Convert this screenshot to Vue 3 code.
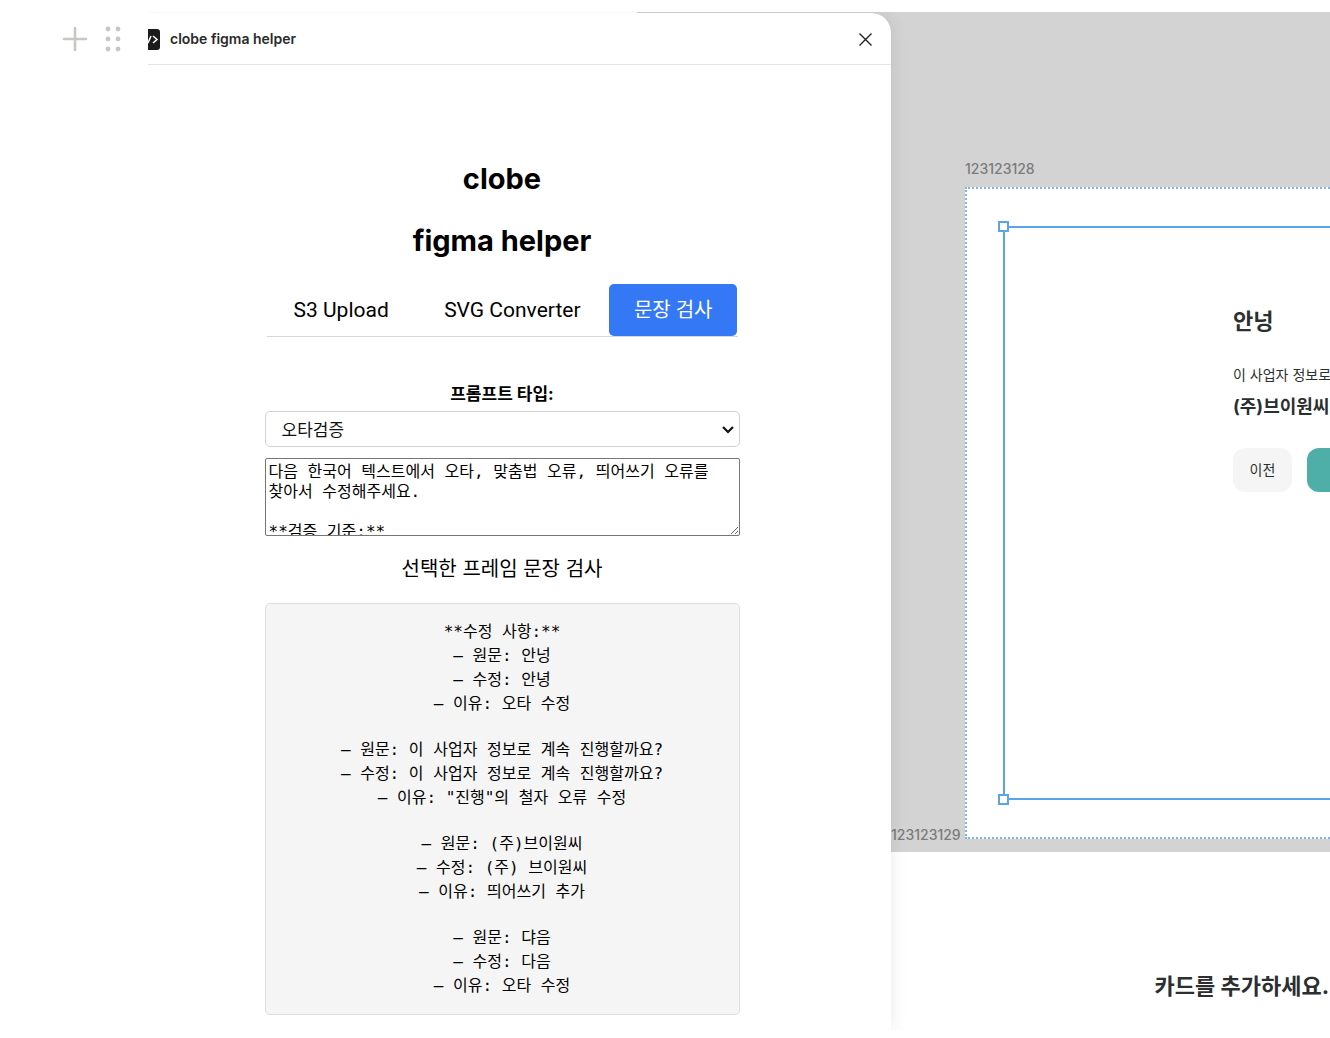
<script setup>
import { ref } from 'vue'

const tabs = [
  { id: 's3', label: 'S3 Upload' },
  { id: 'svg', label: 'SVG Converter' },
  { id: 'check', label: '문장 검사' },
]
const activeTab = ref('check')
const promptType = ref('오타검증')
const prompt = ref(
  '다음 한국어 텍스트에서 오타, 맞춤법 오류, 띄어쓰기 오류를 찾아서 수정해주세요.\n\n**검증 기준:**'
)
const results = [
  '**수정 사항:**\n– 원문: 안넝\n– 수정: 안녕\n– 이유: 오타 수정',
  '– 원문: 이 사업자 정보로 계속 진행할까요?\n– 수정: 이 사업자 정보로 계속 진행할까요?\n– 이유: "진행"의 철자 오류 수정',
  '– 원문: (주)브이원씨\n– 수정: (주) 브이원씨\n– 이유: 띄어쓰기 추가',
  '– 원문: 댜음\n– 수정: 다음\n– 이유: 오타 수정',
]
</script>

<template>
  <div class="page">
    <aside class="gutter">
      <button class="tool" type="button" aria-label="Add block">
        <svg width="26" height="26" viewBox="0 0 26 26" fill="none" stroke="#c8c7c3" stroke-width="2.6" stroke-linecap="round">
          <path d="M13 2v22M2 13h22" />
        </svg>
      </button>
      <button class="tool" type="button" aria-label="Drag block">
        <svg width="16" height="26" viewBox="0 0 16 26" fill="#c8c7c3">
          <circle cx="3" cy="3" r="2.4" /><circle cx="13" cy="3" r="2.4" />
          <circle cx="3" cy="13" r="2.4" /><circle cx="13" cy="13" r="2.4" />
          <circle cx="3" cy="23" r="2.4" /><circle cx="13" cy="23" r="2.4" />
        </svg>
      </button>
    </aside>

    <div class="shot">
      <section class="panel">
        <header class="bar">
          <svg class="logo" width="12" height="21" viewBox="0 0 12 21" aria-hidden="true">
            <path d="M0 0h9a3 3 0 0 1 3 3v15a3 3 0 0 1-3 3H0z" fill="#1b1b1b" />
            <path d="M0 14L3 7M5 7l4 3.500-4 3.500" fill="none" stroke="#fff" stroke-width="1.500" />
          </svg>
          <span class="bar-title">clobe figma helper</span>
          <button class="close" type="button" aria-label="Close">
            <svg width="13" height="13" viewBox="0 0 13 13" fill="none" stroke="#222" stroke-width="1.400">
              <path d="M.5.5l12 12M12.500.5l-12 12" />
            </svg>
          </button>
        </header>

        <main class="body">
          <h1>clobe</h1>
          <h1>figma helper</h1>
          <nav class="tabs">
            <button
              v-for="tab in tabs"
              :key="tab.id"
              type="button"
              class="tab"
              :class="{ active: activeTab === tab.id }"
              @click="activeTab = tab.id"
            >{{ tab.label }}</button>
          </nav>

          <label class="label" for="prompt-type">프롬프트 타입:</label>
          <div class="select-wrap">
            <select id="prompt-type" v-model="promptType">
              <option>오타검증</option>
            </select>
            <svg class="chevron" width="12" height="8" viewBox="0 0 12 8" fill="none" stroke="#111" stroke-width="2.200">
              <path d="M1 1l5 5 5-5" />
            </svg>
          </div>
          <textarea v-model="prompt" aria-label="프롬프트" spellcheck="false"></textarea>
          <button class="run" type="button">선택한 프레임 문장 검사</button>
          <div class="result">
            <pre v-for="(group, i) in results" :key="i">{{ group }}</pre>
          </div>
        </main>
      </section>

      <section class="canvas">
        <div class="board">
          <span class="frame-name">123123128</span>
          <div class="frame-row">
            <span class="frame-name next">123123129</span>
            <div class="frame">
              <div class="selection">
                <i class="handle top"></i>
                <i class="handle bottom"></i>
                <h2>안넝</h2>
                <p class="question">이 사업자 정보로</p>
                <p class="company">(주)브이원씨</p>
                <div class="actions">
                  <button class="prev" type="button">이전</button>
                  <button class="next-step" type="button" aria-label="다음"></button>
                </div>
              </div>
            </div>
          </div>
        </div>
        <p class="add-card">카드를 추가하세요.</p>
      </section>
    </div>
  </div>
</template>

<style>
body {
  margin: 0;
  background: #fff;
}
</style>

<style scoped>
* {
  box-sizing: border-box;
}
.page {
  display: flex;
  padding: 12px 0 9px;
  overflow: hidden;
  font-family: Inter, 'Noto Sans CJK KR', sans-serif;
  color: #000;
}
button {
  border: 0;
  padding: 0;
  background: none;
  font-family: inherit;
  color: inherit;
}
h1, h2, p, pre {
  margin: 0;
}
svg {
  display: block;
}
.gutter {
  flex: 0 0 148px;
  display: flex;
  align-items: flex-start;
  gap: 17px;
  padding: 14px 0 0 62px;
}
.shot {
  flex: 1;
  min-width: 0;
  display: flex;
  background: linear-gradient(#d3d3d3, #d3d3d3) right top / 693px 840px no-repeat;
}
.panel {
  position: relative;
  flex: 743 1 0;
  min-width: 0;
  margin-top: 1px;
  background: #fff;
  border-radius: 0 20px 0 0;
  box-shadow: 2px 0 16px rgba(0, 0, 0, 0.08);
  clip-path: inset(-1px -30px 0 0);
}
.bar {
  display: flex;
  align-items: center;
  height: 52px;
  padding: 1px 19px 0 0;
  border-bottom: 1px solid #e4e4e4;
}
.bar-title {
  flex: 1;
  margin-left: 10px;
  font-size: 14px;
  font-weight: 600;
  line-height: 20px;
  color: #2a2a2a;
}
.body {
  display: flex;
  flex-direction: column;
  width: 475px;
  max-width: 100%;
  margin-left: calc(50% - 255px);
  padding: 92px 0 15px;
}
h1 {
  font-size: 29px;
  line-height: 44px;
  margin-bottom: 18px;
  font-weight: 700;
  text-align: center;
}
.tabs {
  display: flex;
  justify-content: space-between;
  margin: 3px 2px 0;
  border-bottom: 1px solid #d6d6d6;
}
.tab {
  height: 52px;
  padding: 0 27px;
  font: 400 21px/52px Roboto, 'Noto Sans CJK KR', sans-serif;
  white-space: nowrap;
}
.tab.active {
  padding: 0 25px;
  background: #3478f6;
  color: #fff;
  font-size: 20px;
  border-radius: 5px;
}
.label {
  margin-top: 46px;
  font-size: 17px;
  line-height: 22px;
  font-weight: 700;
  text-align: center;
}
.select-wrap {
  position: relative;
  margin-top: 6px;
}
select {
  display: block;
  width: 100%;
  height: 36px;
  padding: 0 16px;
  border: 1px solid #d2d2d2;
  border-radius: 5px;
  background: #fff;
  appearance: none;
  font: 400 17px/24px 'Noto Sans CJK KR', sans-serif;
  color: #111;
}
.chevron {
  position: absolute;
  right: 6px;
  top: 15px;
  pointer-events: none;
}
textarea {
  display: block;
  height: 78px;
  margin-top: 11px;
  padding: 3px;
  border: 1px solid #767676;
  border-radius: 2px;
  overflow: hidden;
  resize: vertical;
  word-break: keep-all;
  font: 400 16px/20px 'DejaVu Sans Mono', 'Noto Sans CJK KR', monospace;
  color: #000;
}
.run {
  margin: 19px 0 20px;
  font-size: 20px;
  line-height: 28px;
}
.result {
  display: flex;
  flex-direction: column;
  gap: 22px;
  padding: 16px;
  border: 1px solid #dedede;
  border-radius: 5px;
  background: #f5f5f5;
  text-align: center;
}
pre {
  font: 400 16px/24px 'DejaVu Sans Mono', 'Noto Sans CJK KR', monospace;
}
.canvas {
  flex: 439 1 0;
  min-width: 0;
}
.board {
  height: 840px;
  padding-top: 147px;
}
.frame-name {
  display: block;
  margin-left: 74px;
  font-size: 14px;
  font-weight: 500;
  line-height: 20px;
  color: #7b7b7b;
}
.frame-row {
  display: flex;
  align-items: flex-end;
  margin-top: 8px;
}
.frame-name.next {
  flex: 0 0 74px;
  margin: 0 0 -6px;
}
.frame {
  flex: 1;
  min-width: 0;
  height: 652px;
  padding: 37px 0 0 36px;
  border: 2px dotted #7fb2e6;
  border-right: 0;
  background: #fff;
}
.selection {
  position: relative;
  height: 574px;
  padding: 77px 0 0 228px;
  border: 2px solid #58a6e8;
  border-right: 0;
  white-space: nowrap;
  color: #2c2f30;
}
.handle {
  position: absolute;
  left: -7px;
  width: 11px;
  height: 11px;
  border: 2px solid #58a6e8;
  background: #fff;
}
.handle.top {
  top: -7px;
}
.handle.bottom {
  bottom: -7px;
}
h2 {
  font-size: 22px;
  line-height: 32px;
  font-weight: 700;
}
.question {
  margin-top: 26px;
  font-size: 14px;
  line-height: 24px;
}
.company {
  margin-top: 6px;
  font-size: 18px;
  line-height: 28px;
  font-weight: 700;
}
.actions {
  display: flex;
  gap: 15px;
  margin-top: 27px;
}
.prev, .next-step {
  flex: none;
  height: 44px;
  border-radius: 12px;
}
.prev {
  width: 59px;
  padding-bottom: 2px;
  background: #f5f5f5;
  font-size: 14px;
}
.next-step {
  width: 120px;
  background: #4eaea8;
}
.add-card {
  margin-top: 118px;
  padding-right: 1px;
  font-size: 22px;
  line-height: 32px;
  font-weight: 700;
  text-align: right;
  color: #2c2f30;
}
</style>
